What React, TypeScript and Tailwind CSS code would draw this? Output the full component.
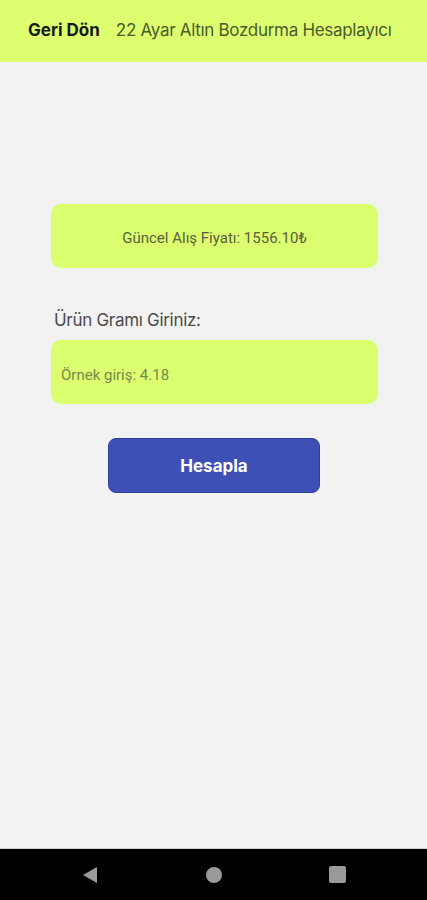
function App() {
  return (
    <div className="flex flex-col w-[427px] h-[900px] bg-[#f2f2f2] font-['Roboto',sans-serif]">
      <header className="flex items-center h-[62px] bg-[#dcfe6f] pl-[28px] gap-[16px]">
        <span className="text-[17px] font-bold text-[#151a10] font-['Inter',sans-serif]">Geri Dön</span>
        <span className="text-[17px] text-[#4a5a2c] font-['Inter',sans-serif] tracking-[-0.3px]">
          22 Ayar Altın Bozdurma Hesaplayıcı
        </span>
      </header>

      <main className="flex-1 flex flex-col px-[51px] pt-[142px]">
        <div className="flex items-center justify-center h-[64px] w-[327px] rounded-[10px] bg-[#dbff6f] pt-[4px]">
          <p className="text-[15px] text-[#586040]">Güncel Alış Fiyatı: 1556.10₺</p>
        </div>

        <p className="mt-[40px] ml-[3px] text-[17px] leading-[24px] text-[#4a4a4a] font-['Inter',sans-serif] tracking-[-0.3px]">
          Ürün Gramı Giriniz:
        </p>

        <div className="mt-[8px] flex items-center h-[64px] w-[327px] rounded-[10px] bg-[#dbff6f] px-[10px] pt-[6px]">
          <input
            type="text"
            placeholder="Örnek giriş: 4.18"
            className="w-full bg-transparent outline-none text-[15px] text-[#4c5a2a] placeholder:text-[#76884a]"
          />
        </div>

        <div className="flex justify-center mt-[34px]">
          <button className="w-[212px] h-[55px] ml-[1px] pt-[3px] rounded-[8px] bg-[#3e4fb6] border border-[#2f3f9c] text-white text-[17px] font-bold font-['Inter',sans-serif]">
            Hesapla
          </button>
        </div>
      </main>

      <nav className="flex items-center justify-between h-[52px] bg-black border-t border-[#cfcfcf] px-[81px]">
        <svg width="18" height="18" viewBox="0 0 18 18">
          <path d="M16 1 L2 9 L16 17 Z" fill="#9a9a9a" />
        </svg>
        <span className="w-[16px] h-[16px] rounded-full bg-[#9a9a9a]" />
        <span className="w-[17px] h-[17px] rounded-[2px] bg-[#9a9a9a]" />
      </nav>
    </div>
  );
}

export default App;
